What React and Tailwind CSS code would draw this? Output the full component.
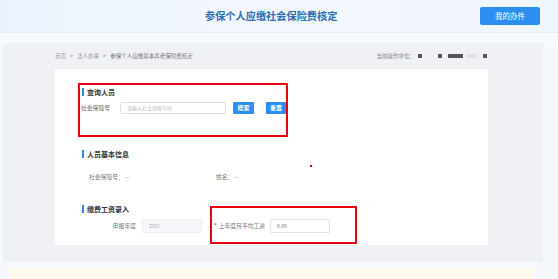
import React from 'react'

const font = { fontFamily: '"Noto Sans CJK SC", "Noto Sans", sans-serif' }

function SectionTitle({ children }) {
  return (
    <div className="flex items-center gap-[3px] h-[8px]">
      <span className="w-[2px] h-[8px] bg-[#2d8cf0]"></span>
      <span className="text-[7px] leading-none font-bold text-[#333]">{children}</span>
    </div>
  )
}

function Block({ w = 'w-[4px]' }) {
  return <span className={`${w} h-[4px] bg-[#555]`}></span>
}

export default function App() {
  return (
    <div
      className="relative w-[558px] h-[279px] overflow-hidden bg-[#f5f9fd] flex flex-col"
      style={font}
    >
      {/* 顶部标题栏 */}
      <header className="h-[33px] shrink-0 flex items-center bg-gradient-to-r from-[#eaf3fc] via-[#f3f8fd] to-[#eef5fc] border-b border-[#e3edf7]">
        <h1 className="ml-[205px] text-[10.2px] font-bold text-[#2f6db5] leading-none">
          参保个人应缴社会保险费核定
        </h1>
        <button className="ml-auto mr-[18px] w-[60px] h-[18px] rounded-[2px] bg-[#2b8ef0] text-white text-[7.5px] leading-none">
          我的办件
        </button>
      </header>

      <div className="h-[10px] shrink-0 bg-[#f8fbfe]"></div>

      {/* 主体灰色面板 */}
      <div className="ml-[3px] w-[540px] h-[219px] shrink-0 bg-[#f0f1f4] flex flex-col">
        <div className="h-[26px] flex items-center justify-between pl-[52px] pr-[56px] text-[5.5px] text-[#999]">
          <div className="flex items-center gap-[4px]">
            <span>首页</span>
            <span>&gt;</span>
            <span>法人办事</span>
            <span>&gt;</span>
            <span className="text-[#777]">参保个人应缴基本养老保险费核定</span>
          </div>
          <div className="flex items-center">
            <span className="text-[#888] mr-[3px]">当前操作单位：</span>
            <Block />
            <span className="w-[10px] mx-[3px] text-[#ccc]">. .</span>
            <Block />
            <span className="w-[6px]"></span>
            <Block w="w-[15px]" />
            <span className="w-[10px] mx-[3px] h-[4px] bg-[#e2e2e2]"></span>
            <span className="w-[4px]"></span>
            <Block />
          </div>
        </div>

        <div className="ml-[52px] w-[433px] h-[176px] bg-white pl-[27px] pt-[19px] flex flex-col">
          <SectionTitle>查询人员</SectionTitle>
          <div className="mt-[6px] h-[12px] flex items-center">
            <span className="-ml-[1px] w-[39px] text-[5.8px] text-[#666]">社会保障号</span>
            <div className="w-[106px] h-[12px] border border-[#dcdfe6] rounded-[1px] flex items-center pl-[6px] text-[5px] text-[#bbb]">
              请输入社会保障号码
            </div>
            <button className="ml-[7px] w-[21px] h-[12px] rounded-[1px] bg-[#2b8ef0] text-white text-[6px] leading-none font-bold">
              搜索
            </button>
            <button className="ml-[12px] w-[20px] h-[12px] rounded-[1px] bg-[#2b8ef0] text-white text-[6px] leading-none font-bold">
              重置
            </button>
          </div>

          <div className="mt-[36px]">
            <SectionTitle>人员基本信息</SectionTitle>
          </div>
          <div className="mt-[15px] h-[8px] flex items-center pl-[7px] text-[5.8px] text-[#777]">
            <span className="w-[127px]">社会保障号： --</span>
            <span>姓名： --</span>
          </div>

          <div className="mt-[24px]">
            <SectionTitle>缴费工资录入</SectionTitle>
          </div>
          <div className="mt-[6px] h-[14px] flex items-center text-[5.8px] text-[#777]">
            <span className="w-[54px] text-right">申报年度</span>
            <div className="ml-[6px] w-[60px] h-[14px] bg-[#f5f7fa] border border-[#eceef2] rounded-[1px] flex items-center pl-[6px] text-[5px] text-[#aaa]">
              2021
            </div>
            <span className="ml-[12px] text-[#e60012]">*</span>
            <span className="ml-[2px]">上年度月平均工资</span>
            <div className="ml-[5px] w-[60px] h-[14px] border border-[#dcdfe6] rounded-[1px] flex items-center pl-[6px] text-[5px] text-[#777]">
              0.00
            </div>
          </div>
        </div>
      </div>

      <div className="h-[6px] shrink-0"></div>
      <div className="ml-[11px] w-[522px] flex-1 bg-[#fffaeb]"></div>

      {/* 标注框 */}
      <div className="absolute left-[78px] top-[83px] w-[210px] h-[54px] border-[2.5px] border-[#e60012]"></div>
      <div className="absolute left-[210px] top-[206px] w-[147px] h-[38px] border-[2.5px] border-[#e60012]"></div>
      <div className="absolute left-[310px] top-[165px] w-[2px] h-[2px] bg-[#e60012]"></div>
    </div>
  )
}
